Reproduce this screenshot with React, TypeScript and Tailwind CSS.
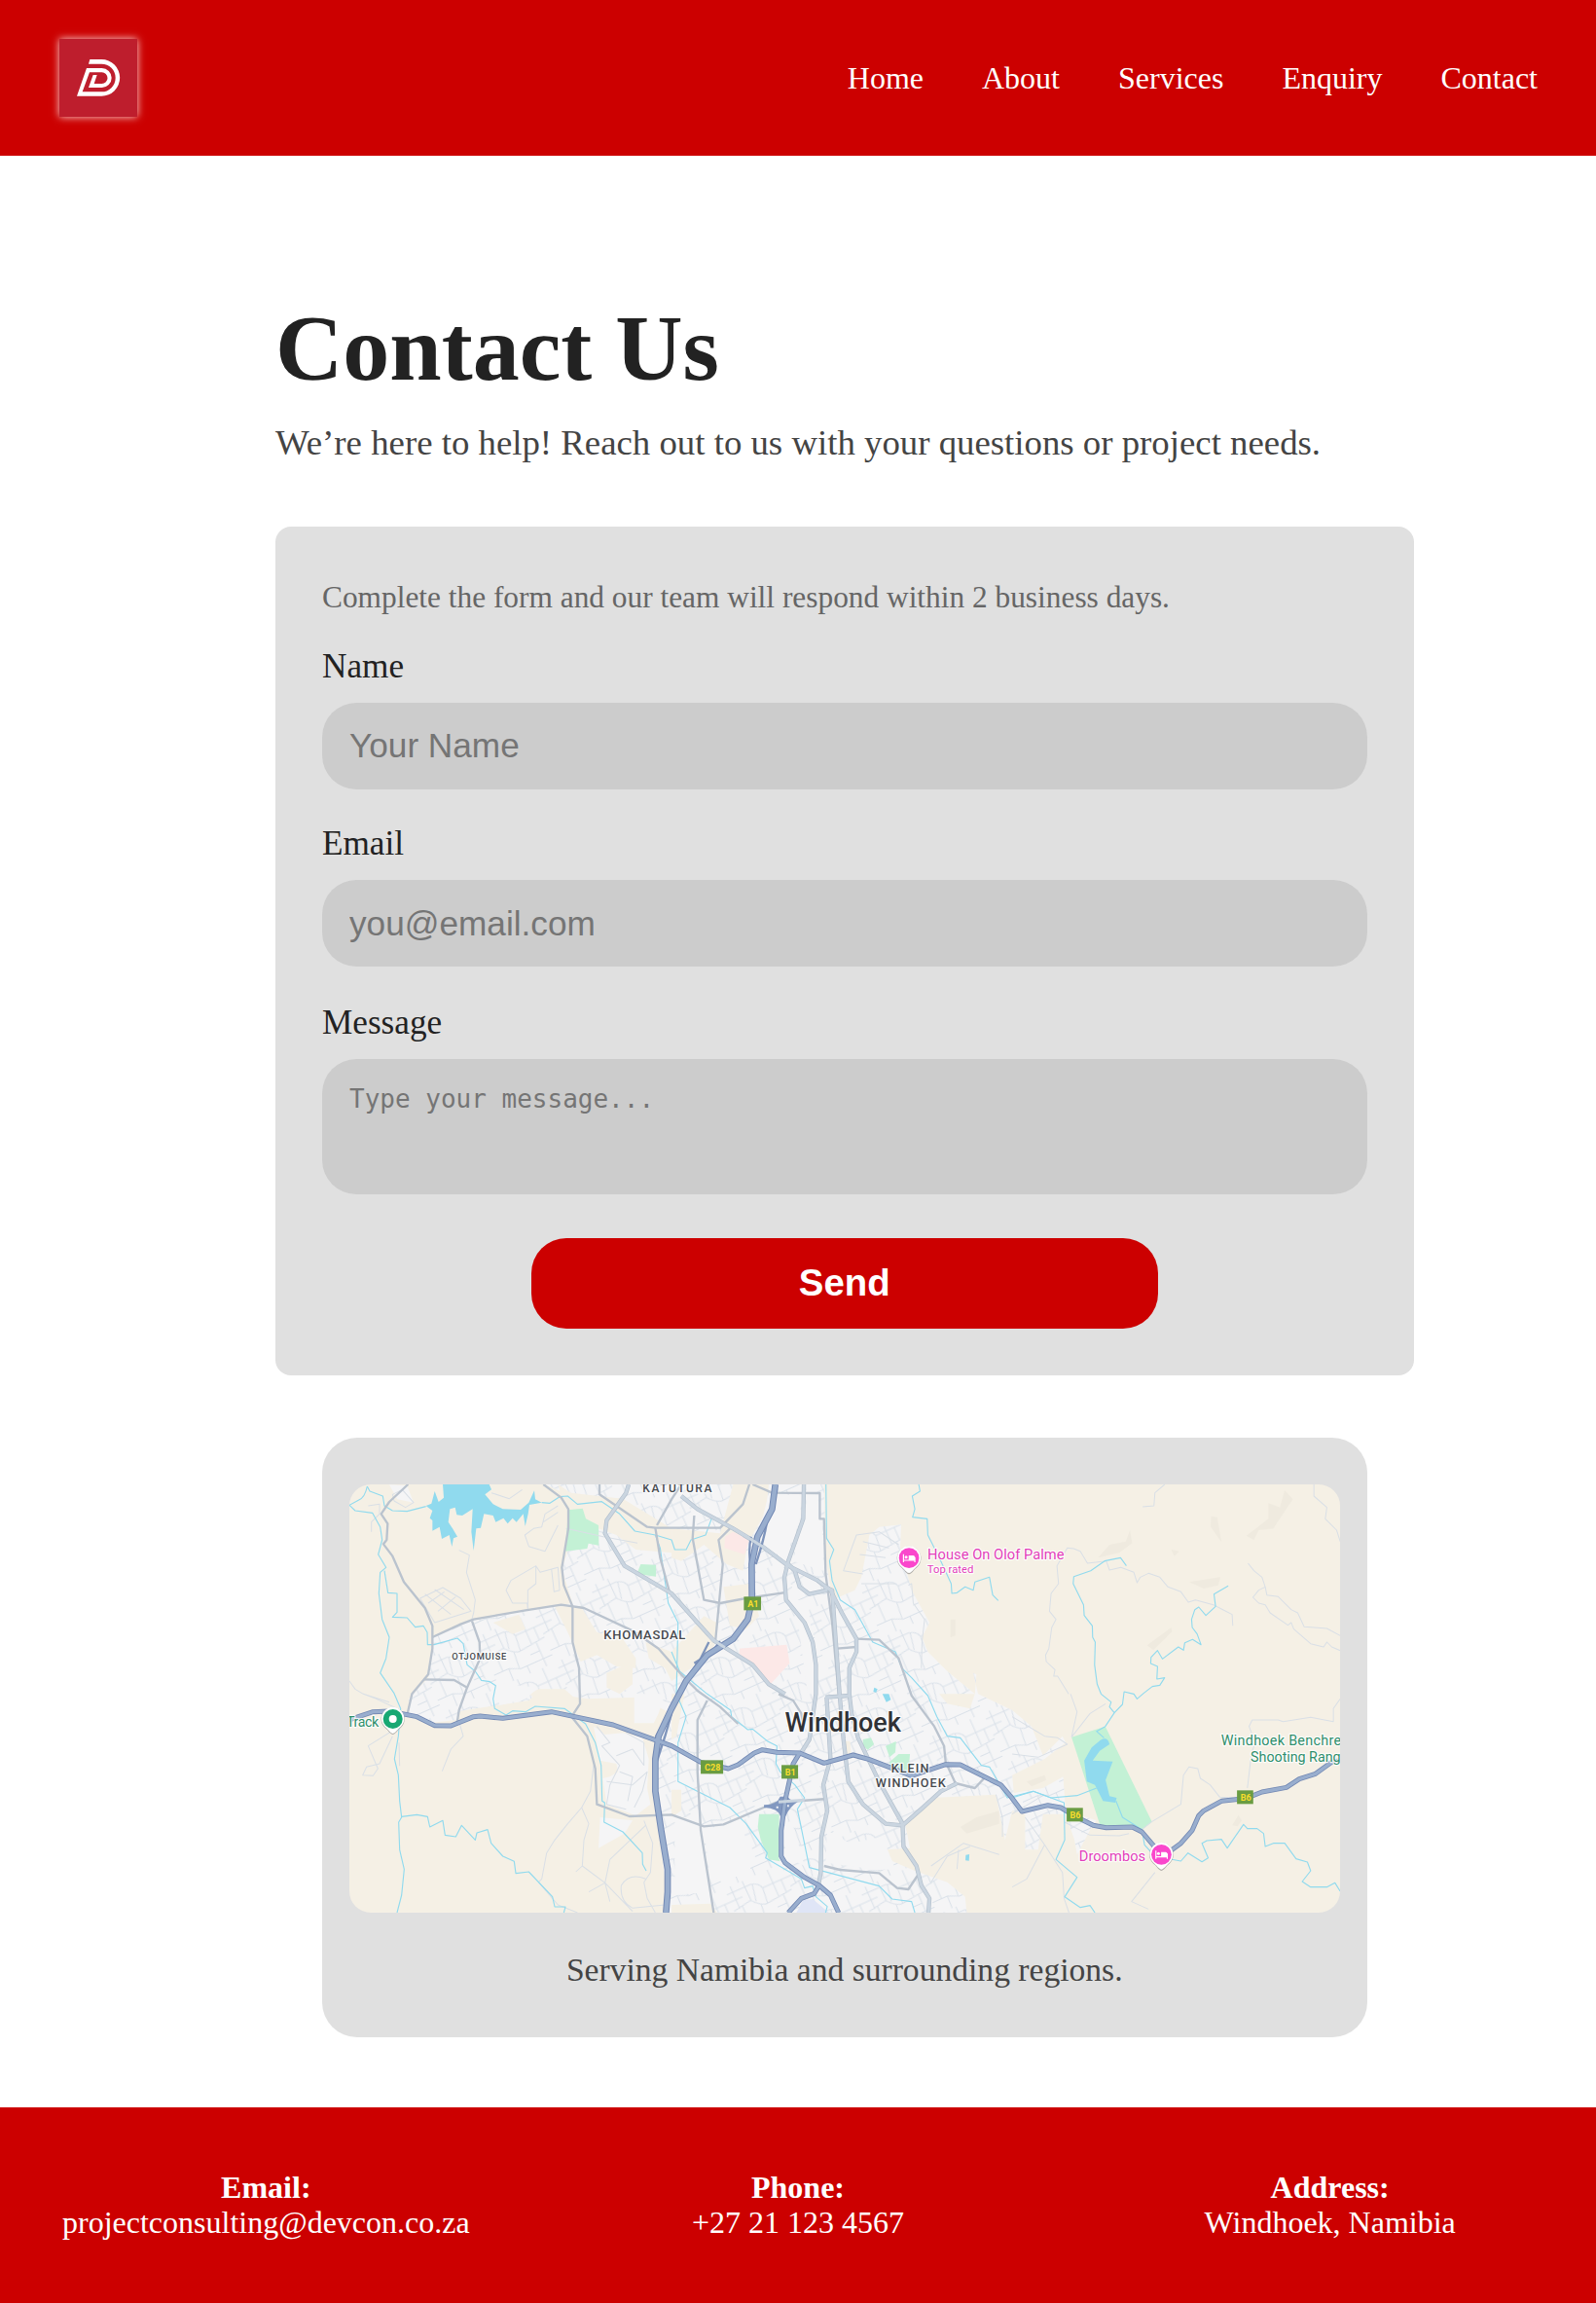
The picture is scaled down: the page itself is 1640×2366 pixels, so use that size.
import React from "react";

const navItems = ["Home", "About", "Services", "Enquiry", "Contact"];

const contacts = [
  { title: "Email:", value: "projectconsulting@devcon.co.za" },
  { title: "Phone:", value: "+27 21 123 4567" },
  { title: "Address:", value: "Windhoek, Namibia" },
];

const urban =
  "M660 74 L740 110 L730 280 L712 335 L745 440 L610 462 L440 490 L315 545 L300 670 L240 735 L240 790 L300 810 L385 800 L400 772 L610 740 L640 712 L790 735 L950 730 L1040 775 L1010 870 L1000 1020 L1040 1394 L1850 1394 L1960 1394 L1955 1345 L1900 1300 L1800 1265 L1730 1235 L1710 1200 L1785 1195 L1770 1120 L1850 1040 L2050 1030 L2078 1170 L2100 1080 L2140 1090 L2140 1200 L2180 1200 L2195 1090 L2265 1090 L2292 1170 L2300 1215 L2345 1130 L2360 1110 L2265 1080 L2257 975 L2195 1010 L2105 1025 L2100 970 L2200 920 L2265 870 L2255 850 L2195 910 L2160 820 L2100 770 L1995 720 L1980 655 L1990 660 L1985 720 L1900 650 L1840 590 L1822 545 L1845 500 L1790 400 L1755 270 L1758 198 L1690 205 L1660 230 L1635 360 L1615 400 L1545 430 L1525 300 L1520 74 Z";

const landPatches = [
  "M700 74 L740 100 L900 118 L1050 210 L1050 285 L940 275 L880 230 L730 175 Z",
  "M1050 210 L1200 225 L1240 74 L1350 74 L1340 160 L1285 255 L1270 340 L1220 320 L1150 260 L1080 310 L1050 300 Z",
  "M500 500 L580 475 L600 520 L560 535 Z",
  "M690 450 L770 450 L820 530 L900 550 L940 610 L940 640 L880 635 L820 600 L770 620 L730 530 Z",
  "M970 560 L1050 590 L1150 480 L1190 500 L1180 590 L1110 640 L1050 680 L1030 640 L980 610 Z",
  "M610 720 L640 705 L720 705 L760 740 L780 800 L700 780 Z",
  "M850 655 L930 620 L930 690 L890 720 L850 700 Z",
  "M1210 390 L1290 380 L1320 480 L1280 520 L1230 510 Z",
  "M1050 720 L1090 720 L1065 850 L1050 860 Z",
  "M1050 1015 L1080 1015 L1080 1080 L1050 1100 Z",
  "M1050 1370 L1170 1366 L1190 1394 L1050 1394 Z",
  "M1875 720 L1985 720 L1970 765 L1900 750 Z",
  "M1580 865 L1600 865 L1605 920 L1585 920 Z",
];

const blankBlocks = [
  "M180 75 L235 78 L255 130 L205 120 Z",
  "M1350 100 L1450 110 L1445 190 L1400 300 L1330 250 L1320 220 Z",
  "M1470 110 L1500 110 L1515 200 L1518 340 L1425 310 Z",
  "M1420 430 L1470 430 L1480 520 L1500 720 L1560 720 L1470 720 L1440 500 Z",
  "M460 680 L640 700 L600 735 L520 755 L505 690 L470 670 Z",
  "M1060 1100 L1130 1100 L1170 1330 L1060 1340 Z",
  "M1150 1140 L1250 1110 L1300 1200 L1290 1280 L1170 1290 Z",
  "M1400 1120 L1420 1110 L1460 1250 L1400 1220 Z",
  "M1530 1140 L1600 1180 L1700 1160 L1740 1260 L1690 1262 L1525 1240 Z",
];

const greens = [
  "M732 153 L776 148 L786 180 L825 200 L826 262 L794 256 L790 272 L722 280 Z",
  "M955 320 L1002 322 L1002 358 L943 350 Z",
  "M1320 1090 L1382 1090 L1380 1225 L1385 1236 L1350 1230 L1325 1170 L1316 1130 Z",
  "M1640 860 L1665 855 L1674 875 L1655 892 L1640 880 Z",
  "M1710 880 L1742 866 L1740 900 L1722 915 Z",
  "M1722 930 L1750 905 L1785 905 L1780 960 L1728 955 Z",
  "M2283 853 L2387 820 L2531 1114 L2500 1138 L2372 1128 Z",
];

const reds = [
  "M1215 235 L1240 220 L1290 245 L1275 290 L1213 270 Z",
  "M1260 580 L1405 568 L1414 625 L1355 690 L1300 635 L1258 595 Z",
];

const shades = [
  "M2365 300 L2400 260 L2450 250 L2463 215 L2470 255 L2430 285 Z",
  "M2822 232 L2890 180 L2890 132 L2925 145 L2940 92 L2965 120 L2905 210 L2860 215 L2845 245 Z",
  "M2713 172 L2732 175 L2745 252 L2712 205 Z",
  "M2646 375 L2742 360 L2735 385 L2690 395 Z",
  "M2516 570 L2590 515 L2593 528 L2535 585 Z",
  "M2590 275 L2615 280 L2600 295 Z",
  "M1910 490 L1925 490 L1925 540 L1910 545 Z",
  "M1940 1130 L1990 1100 L2060 1080 L2060 1120 L1960 1150 Z",
  "M2778 1125 L2797 1093 L2808 1110 L2795 1128 Z",
  "M2145 990 L2200 970 L2205 985 L2160 1005 Z",
];

const waterBodies = [
  "M345 74 L488 74 L495 90 L475 105 L500 135 L530 150 L585 152 L610 130 L627 93 L630 120 L650 130 L612 137 L608 165 L599 203 L593 165 L572 190 L560 178 L545 195 L532 178 L508 190 L500 170 L472 165 L462 208 L448 210 L440 278 L433 220 L437 150 L405 170 L388 168 L383 145 L367 150 L362 190 L375 210 L390 235 L378 240 L373 266 L365 230 L342 242 L335 205 L313 217 L313 185 L305 178 L313 155 L293 140 L310 133 L320 95 L332 128 L348 115 Z",
  "M2372 862 Q2395 850 2400 875 L2370 895 L2348 925 L2410 928 L2388 985 L2400 1035 L2422 1040 L2418 1055 L2380 1050 L2355 1000 L2330 990 L2322 925 L2345 885 Z",
  "M1700 720 L1720 720 L1726 738 L1712 745 Z",
  "M1957 1216 L1968 1214 L1967 1234 L1956 1233 Z",
  "M1675 700 L1685 705 L1680 716 L1672 712 Z",
];

const streams = [
  "M112 80 Q105 115 85 123 L57 138 L75 155 L128 162 L152 205 L158 245 L146 290 L170 330 L152 345 L148 410 L158 490 L180 545 L170 610 L152 655 L195 718 L215 765 L208 850 L196 920 L208 970 L212 1050 L218 1100 L209 1115 L212 1200 L226 1260 L218 1340 L204 1394",
  "M112 80 L120 95 L160 110 L165 140 L190 155 L235 157 L293 142",
  "M165 340 L176 408 L204 410 L204 468 L190 483 L235 485 L260 514 L285 510 L297 530 L298 568 L318 568 L390 548 L408 565 L420 630 L445 650 L464 678 L490 682 L508 694 L500 735 L505 765 L540 785 L560 772 L600 775 L630 758 L720 765 L785 812 L815 870 L833 940 L836 1050 L844 1055 L842 1115 L900 1145 L960 1210 L961 1245 L972 1265",
  "M218 1098 L265 1092 L298 1098 L305 1130 L345 1110 L352 1155 L385 1160 L403 1125 L445 1170 L450 1148 L483 1138 L494 1180 L530 1220 L565 1236 L570 1273 L610 1268 L683 1345 L690 1376 L723 1376 L718 1394",
  "M650 130 L675 132 L705 112 L730 110 L760 135 L835 127 L890 165 L937 218 L1000 230 L1050 245 L1060 275 L1095 275 L1110 245 L1155 230 L1175 175",
  "M1000 230 L1015 270 L1040 440 L1070 500 L1065 720 L1095 790 L1070 870 L1070 990 L1140 1025 L1230 1070 L1280 1120 L1345 1210 L1340 1225 L1450 1290 L1460 1318 L1485 1312 L1495 1345 L1530 1375 L1525 1394",
  "M1050 590 L1075 650 L1160 720 L1232 770 L1235 790 L1285 830 L1300 828 L1345 865 L1375 880 L1372 935 L1385 960 L1430 1000 L1460 1040 L1438 1075 L1475 1255 L1690 1312 L1730 1352 L1790 1360 L1800 1394",
  "M1526 74 L1528 240 L1550 275 L1537 310 L1545 370 L1570 430 L1615 460 L1670 560 L1740 590 L1760 640 L1790 670 L1840 725 L1868 790 L1900 850 L1940 855 L2005 940 L2030 945 L2085 1040 L2165 1020 L2260 1055 L2262 1170 L2235 1230 L2300 1285 L2262 1345 L2310 1378 L2340 1372 L2355 1394",
  "M1812 74 L1816 95 L1792 110 L1800 150 L1793 175 L1838 180 L1840 230 L1860 270 L1880 310 L1912 380 L1914 410 L1930 408 L1955 390 L1980 400 L1985 375 L2030 360 L2040 415 L2057 432",
  "M2452 325 L2434 300 L2385 310 L2342 340 L2290 358 L2288 380 L2320 445 L2322 478 L2347 510 L2348 545 L2356 560 L2354 630 L2362 690 L2374 720 L2405 745 L2400 760 L2415 778 L2387 820 L2360 835 L2383 855",
  "M2415 778 L2440 752 L2445 713 L2475 720 L2485 735 L2505 718 L2532 697 L2555 693 L2570 670 L2546 674 L2548 635 L2527 626 L2528 607 L2548 586 L2563 612 L2612 575 L2628 585 L2632 562 L2656 552 L2682 568 L2670 535 L2655 515 L2653 490 L2663 460 L2675 452 L2697 478 L2727 450 L2722 412 L2766 387",
  "M2100 1040 L2165 1020 L2220 1040 L2300 1033 L2360 1010",
  "M2420 1050 L2440 1100 L2500 1138 L2508 1185 L2540 1220 L2620 1235 L2642 1210 L2685 1237 L2704 1225 L2685 1180 L2700 1172 L2745 1168 L2763 1195 L2813 1122 L2825 1135 L2855 1135 L2875 1150 L2880 1190 L2905 1180 L2940 1180 L2975 1228 L3010 1238 L3020 1265 L2994 1298 L3020 1315 L3070 1315 L3095 1302 L3111 1328",
];

const minorRoads = [
  "M395 277 L427 292 L418 345 L445 430 L440 470 L433 495",
  "M275 425 L345 392 L400 425 L432 465 L320 500 Z M290 412 L370 475 M320 398 L410 460 M300 440 L350 405 M330 465 L385 420",
  "M607 460 L605 440 L560 440 L540 400 L555 370 L632 325 L632 380 L607 400 Z M632 325 L645 345 L700 330 M680 335 L700 330 L705 400 L688 405 Z",
  "M660 280 L610 265 L598 230 L625 210 L650 205 L660 165 L700 140 M660 280 L700 200 M655 190 L700 160",
  "M190 105 L220 90 L255 130 L230 145 L195 125 Z M115 140 L150 135 L150 165 L125 190 L125 220",
  "M495 100 L550 118 L590 90 M725 210 L840 235 L945 255",
  "M57 680 L75 705 L100 720 L180 745 M100 720 L140 735 L215 770",
  "M195 830 L115 880 L145 950 L130 972 L98 970 L110 945 L150 935 L190 850 M210 870 L212 942",
  "M395 805 L408 850 L370 890 L343 958",
  "M810 940 L800 1020 L773 1070 L730 1120 L690 1170 L665 1210 L650 1290 L640 1300 L700 1370 L760 1394 M773 1070 L795 1120 L780 1170 L775 1250 L845 1302 L860 1360 M755 1268 L775 1250 M970 1125 L860 1230 L845 1302 L795 1330 M845 1302 L930 1390 M970 1290 Q920 1270 895 1310 Q890 1360 930 1380 L1030 1370 M965 1110 L992 1180 L985 1270 L965 1300 L975 1350 L1000 1394",
  "M820 820 L860 870 L835 880 L890 940 L860 1000 L850 1060 L910 1075 M880 910 L930 890 L965 940 M910 840 L965 870 L965 940 M890 960 L930 975 L915 1050 M850 990 L930 1000 L975 960 L960 1020 L935 1070",
  "M1635 380 L1740 380 M1640 350 L1580 340 L1620 230 L1690 220 L1750 260 M1630 290 L1710 300 M1640 250 L1720 270 M1780 385 L1790 380 L1795 440 L1830 490 L1822 560 L1820 640",
  "M2274 720 L2240 665 L2228 665 L2232 645 L2205 620 L2203 600 L2213 580 L2222 515 L2235 490 L2215 465 L2220 410 L2243 380 L2238 325 L2270 270 L2290 272 L2310 280 L2332 317 L2390 310 L2400 338 L2435 330 L2475 345 L2485 377 L2495 360 L2520 348 L2555 360 L2580 390 L2620 405 L2643 437 L2665 430 L2720 445 L2745 458 L2778 475 L2780 510",
  "M2570 74 L2540 100 L2537 140 L2502 143 M3030 74 L3030 110 L3070 145 L3065 180 L3100 215 L3111 250",
  "M2827 317 L2845 340 L2870 360 L2880 390 L2860 400 L2842 422 L2860 440 L2880 445 L2895 470 L2950 508 L2960 500 L2968 520 L3020 565 L3060 575 L3070 560 L3085 575 L3111 586 M2880 390 L2885 415 L2920 420 L2960 460 L2980 470 L3000 513 L3070 518 L3111 540",
  "M2280 720 L2300 775 L2283 853 M2388 750 L2340 780 L2283 853 M2275 1394 L2260 1350 L2255 1270 L2200 1185 L2140 1100 M2200 1185 L2145 1290 L2100 1315",
  "M2500 1138 L2530 1114 L2620 1060 L2628 970 L2645 945 L2672 950 L2680 980 L2710 1000 L2740 1038 L2780 1040 M2825 1010 L2838 900 L2850 870 L2830 820 L2840 800 L2920 800 L2935 805 L3020 792 L3090 805 L3090 765 L3111 735",
  "M2540 1270 L2468 1360 L2520 1383 M2262 1115 L2310 1140 L2340 1155 L2430 1157 L2460 1150",
  "M2100 790 L2200 850 L2240 855 L2270 875 L2180 915 L2100 905 M2100 1090 L2150 1060 L2200 1030 M2050 1030 L2070 1100 L2070 1160",
  "M1850 1300 L1900 1220 L1970 1190 M1850 1250 L1950 1180 L2060 1215 M1935 1200 L1930 1260",
];

const secondary = [
  "M238 74 L180 128 L155 165 L175 195 L172 245 L162 258 L190 295 L225 375 L290 455 L313 510 L313 580 L300 660 L250 720 L235 785",
  "M313 545 L400 505 L440 490 L600 462 L710 445 L780 455 L930 525 L1010 580 L1080 660 L1130 710 L1200 760 L1255 812",
  "M435 495 L458 560 L460 610 L420 700 L395 770 L388 815",
  "M285 675 L380 677 L420 700",
  "M655 74 L710 115 L732 150 L732 210 L712 330 L718 385 L745 450 L745 560 L765 640 L768 750 L742 790 L790 850 L815 950 L820 1060 L920 1097 L1050 1092 L1150 1128 L1210 1122 L1370 1055 L1530 1043",
  "M828 74 L828 105 L975 205 L1000 208 L1200 208 L1270 135 L1290 74",
  "M1000 208 L1015 300 L1045 410 M1005 200 L1050 120 L1080 74",
  "M1300 74 L1360 100 L1507 101 L1507 180 L1520 180 L1525 350 L1545 500 L1565 720",
  "M1120 170 L1115 240 L1150 430 L1200 440 L1280 425 L1395 408",
  "M1230 210 L1195 245 L1208 320 L1185 560",
  "M1160 740 L1130 800 L1130 960 L1140 1140 L1180 1394",
  "M1380 720 L1425 740 L1450 780 L1455 830",
  "M1520 1250 L1570 1262 L1690 1272 L1745 1318 L1780 1322 L1808 1280",
  "M1560 580 L1620 575 M1620 550 L1690 553 L1750 610 L1790 725 L1860 820 L1890 880 L1895 930 L1925 995 L1985 1010 L2018 975",
];

const primary = [
  "M918 74 L910 100 L850 185 L845 225 L905 325 L1050 410 L1130 500 L1180 555 L1300 630 L1350 690 L1400 720",
  "M1080 110 L1130 150 L1240 210 L1330 265 L1410 325 L1500 370 L1540 400 L1575 470 L1620 550 L1620 590 L1598 640 L1598 720 L1605 780 L1625 855 L1690 990 L1762 1120",
  "M1458 74 L1456 180 L1410 310 L1398 360 L1403 430 L1460 500 L1485 560 L1495 630 L1495 720 L1475 860 L1450 900 M1410 320 L1430 340 L1445 390 L1475 412 L1530 400",
  "M1520 390 L1545 400 L1555 540 L1568 720 L1580 860 L1595 990 L1640 1060 L1710 1120 L1762 1125 L1825 1070 L1880 1020 L1930 995",
  "M1528 730 L1540 920 L1518 1000 L1530 1080 L1512 1160 L1510 1270 L1503 1310 M1525 730 L1600 725",
  "M1762 1120 L1765 1190 L1805 1250 L1820 1310 L1845 1350 L1842 1394",
];

const westernBypass = [
  "M1370 74 L1360 150 L1315 235 L1297 320 L1298 430 L1285 490 L1240 550 L1160 600 L1095 680 L1050 765 L1010 850 L1000 920 L1000 1020 L1018 1140 L1038 1260 L1038 1330 L1033 1394",
];

const highways = [
  "M57 800 L85 790 L130 775 L180 773 L265 790 L320 817 L370 818 L440 790 L460 788 L530 795 L680 775 L870 815 L1050 880 L1140 930 L1225 950 L1255 938 L1305 902 L1330 892 L1375 900 L1445 902 L1520 933 L1610 908 L1660 922 L1790 972 L1895 937 L1940 938 L2020 978 L2065 1000 L2095 1035 L2130 1082 L2210 1063 L2250 1070 L2300 1100 L2350 1125 L2390 1132 L2470 1130 L2500 1145 L2555 1210 L2590 1202 L2620 1180 L2655 1140 L2675 1095 L2690 1080 L2745 1050 L2820 1042 L2870 1022 L2945 1008 L2985 982 L3035 966 L3085 930 L3111 925",
  "M1445 902 L1425 935 L1400 1050 L1388 1140 L1388 1220 L1400 1240 L1460 1285 L1505 1310 L1540 1340 L1565 1394 M1505 1310 L1490 1335 L1450 1350 L1410 1394",
];

const ramps = [
  "M1345 185 Q1335 245 1310 320 M1295 235 Q1285 280 1296 340",
  "M1200 558 L1175 590 L1120 625 M1165 560 L1140 610 L1105 660",
  "M1050 780 L1030 850 L1004 930 M1030 800 L1003 850 L1000 920",
];

function Strokes({ paths, color, width }: { paths: string[]; color: string; width: number }) {
  return (
    <g fill="none" stroke={color} strokeWidth={width} strokeLinejoin="round">
      {paths.map((d) => (
        <path key={d} d={d} />
      ))}
    </g>
  );
}

function Shapes({ paths, color }: { paths: string[]; color: string }) {
  return (
    <g fill={color}>
      {paths.map((d) => (
        <path key={d} d={d} />
      ))}
    </g>
  );
}

function Shield({ x, y, w, label }: { x: number; y: number; w: number; label: string }) {
  return (
    <g>
      <rect x={x} y={y} width={w} height={42} fill="#6a9c42" />
      <text x={x + w / 2 + 2} y={y + 31} fontSize={27} fontWeight={700} fill="#f8dc2c" textAnchor="middle">
        {label}
      </text>
    </g>
  );
}

function HotelPin({ x, y }: { x: number; y: number }) {
  return (
    <g transform={`translate(${x} ${y})`}>
      <path d="M0 50 C-10 48 -14 36 -26 27 A37 37 0 1 1 26 27 C14 36 10 48 0 50 Z" fill="#777" opacity={0.55} />
      <path d="M0 46 C-9 44 -14 34 -26 24 A36 36 0 1 1 26 24 C14 34 9 44 0 46 Z" fill="#fff" />
      <circle r={31} fill="#fa47cc" />
      <path d="M-17 -12 V13 M-17 7 H18 M18 13 V-3" fill="none" stroke="#fff" strokeWidth={3.5} />
      <path d="M-1 -8 H13 Q18 -8 18 -3 V7 H-1 Z" fill="#fff" />
      <circle cx={-9} cy={-3} r={4.5} fill="#fff" />
    </g>
  );
}

function WindhoekMap() {
  return (
    <svg viewBox="57 74 3054 1320" className="block h-[440px] w-full rounded-[22px]" fontFamily="Roboto, sans-serif" preserveAspectRatio="none">
      <defs>
        <pattern id="streets" width="190" height="170" patternUnits="userSpaceOnUse" patternTransform="rotate(-24)">
          <path
            d="M0 20 H80 Q105 25 110 45 H190 M0 75 L60 65 Q80 90 100 95 L190 85 M0 130 H50 L85 145 H190 M20 0 V75 M60 0 L62 66 M85 22 L75 75 M110 45 L105 93 M145 0 V88 M172 45 V85 M30 70 V130 M50 130 L48 170 M85 90 L80 145 M160 87 V170 M105 145 V170 M0 45 H42 M128 118 H160"
            fill="none"
            stroke="#dae1e9"
            strokeWidth="3"
          />
        </pattern>
        <clipPath id="urbanClip">
          <path d={urban} />
        </clipPath>
      </defs>
      <rect x="57" y="74" width="3054" height="1320" fill="#f5f0e5" />
      <Shapes color="#efeadf" paths={shades} />
      <path d={urban} fill="#f5f5f6" />
      <g clipPath="url(#urbanClip)">
        <rect x="57" y="74" width="3054" height="1320" fill="url(#streets)" />
      </g>
      <path d="M810 820 L845 845 L900 840 L960 855 L980 920 L975 1010 L985 1060 L940 1095 L850 1060 L838 980 L860 975 L885 960 L880 935 L830 925 Z M830 1100 L930 1110 L905 1150 L825 1195 Z M935 720 L1030 720 L1010 780 L995 810 L935 810 Z" fill="#f5f5f6" />
      <Shapes color="#f5f0e5" paths={landPatches} />
      <Shapes color="#f5f5f6" paths={blankBlocks} />
      <path d="M1435 1394 L1455 1355 L1485 1352 L1535 1394 Z" fill="#dfe5f6" />
      <Shapes color="#fce8e7" paths={reds} />
      <Shapes color="#c3f1d5" paths={greens} />
      <Strokes paths={minorRoads} color="#d9dfe6" width={3} />
      <Shapes color="#90daee" paths={waterBodies} />
      <Strokes paths={streams} color="#90daee" width={3.4} />
      <Strokes paths={secondary} color="#bac3ce" width={7} />
      <Strokes paths={primary} color="#b4c0cd" width={13} />
      <Strokes paths={primary} color="#cad5e0" width={9} />
      <Strokes paths={ramps} color="#7e94bb" width={7} />
      <path d="M1335 1062 Q1375 1062 1385 1036 H1408 Q1415 1050 1442 1050 Q1412 1070 1402 1096 H1386 Q1378 1072 1335 1070 Z" fill="#8298c0" />
      <path d="M1373 1066 h6 v6 h-6 Z M1406 1062 h6 v6 h-6 Z" fill="#f5f5f6" />
      <Strokes paths={highways} color="#7288b3" width={15} />
      <Strokes paths={westernBypass} color="#7288b3" width={20} />
      <Strokes paths={highways} color="#99aece" width={10} />
      <Strokes paths={westernBypass} color="#99aece" width={14} />
      <Strokes paths={["M1240 210 L1330 265 L1410 325 M1165 540 L1180 555 L1215 577 M1380 1053 L1460 1047"]} color="#cad5e0" width={9} />

      <Shield x={1273} y={420} w={53} label="A1" />
      <Shield x={1140} y={924} w={69} label="C28" />
      <Shield x={1389} y={939} w={51} label="B1" />
      <Shield x={2268} y={1071} w={50} label="B6" />
      <Shield x={2793} y={1017} w={50} label="B6" />

      <HotelPin x={1782} y={301} />
      <HotelPin x={2560} y={1215} />
      <g transform="translate(191 797)">
        <path d="M0 48 C-9 46 -13 36 -25 26 A36 36 0 1 1 25 26 C13 36 9 46 0 48 Z" fill="#777" opacity={0.55} />
        <path d="M0 45 C-9 43 -13 33 -25 23 A35 35 0 1 1 25 23 C13 33 9 43 0 45 Z" fill="#fff" />
        <circle r={30} fill="#18a873" />
        <circle r={12} fill="#fff" />
      </g>

      <g stroke="#fff" strokeOpacity={0.85} strokeLinejoin="round" strokeWidth={7} className="[paint-order:stroke]">
        <g fill="#46494e" fontWeight={500}>
          <text x={961} y={99} fontSize={36} textLength={213}>KATUTURA</text>
          <text x={841} y={552} fontSize={39} textLength={252}>KHOMASDAL</text>
          <text x={373} y={613} fontSize={28} textLength={168}>OTJOMUISE</text>
          <text x={1727} y={963} fontSize={38} textLength={116}>KLEIN</text>
          <text x={1679} y={1008} fontSize={38} textLength={216}>WINDHOEK</text>
        </g>
        <text x={1399} y={835} fontSize={81} fontWeight={500} fill="#303236" textLength={358}>Windhoek</text>
        <g fill="#e33fba">
          <text x={1839} y={306} fontSize={44} textLength={421}>House On Olof Palme</text>
          <text x={1838} y={348} fontSize={34} textLength={143}>Top rated</text>
          <text x={2306} y={1236} fontSize={44} textLength={205}>Droombos</text>
        </g>
        <g fill="#2f8f6c">
          <text x={48} y={821} fontSize={43} textLength={100}>Track</text>
          <text x={2744} y={877} fontSize={43} textLength={408}>Windhoek Benchrest</text>
          <text x={2835} y={929} fontSize={43} textLength={300}>Shooting Range</text>
        </g>
      </g>
    </svg>
  );
}

function Logo() {
  return (
    <div className="h-20 w-20 bg-[#be1e2d] shadow-[0_0_8px_rgba(255,255,255,0.85)]">
      <svg viewBox="0 0 240 240" className="h-20 w-20" fill="#fff">
        <path d="M94 63 H130 A56.500 56.500 0 0 1 130 176 H54 L84 90 H131 A30 30 0 0 1 131 150 H90 L104 111 H116 L107 138 H131 A17.500 17.500 0 0 0 131 103 H93 L71 163 H130 A43 43 0 0 0 130 77 H90 Z" />
      </svg>
    </div>
  );
}

const labelClass = "block h-10 text-[35.2px] leading-10 text-[#222]";
const inputClass =
  "block h-[89.4px] w-full rounded-[35.2px] bg-[#ccc] px-7 font-['Liberation_Sans',Arial,sans-serif] text-[35.2px] outline-none placeholder:text-[#757575]";

export default function App() {
  return (
    <div className="flex h-[2366px] w-[1640px] flex-col bg-white font-['Liberation_Serif','Times_New_Roman',serif]">
      <header className="flex h-40 shrink-0 items-center justify-between bg-[#cc0000] pr-[60px] pl-[61px]">
        <Logo />
        <nav className="flex gap-[60px] text-[32px] leading-9 text-white">
          {navItems.map((item) => (
            <a key={item} href="#">{item}</a>
          ))}
        </nav>
      </header>

      <main className="ml-[283px] w-[1169.5px] pt-[143px]">
        <h1 className="text-[96px] leading-[110px] font-bold text-[#222]">Contact Us</h1>
        <p className="mt-[21px] text-[36.8px] leading-[42px] text-[#444]">
          We’re here to help! Reach out to us with your questions or project needs.
        </p>

        <form className="mt-[64.700px] rounded-2xl bg-[#e0e0e0] px-12 pt-[55.3px] pb-12">
          <p className="text-[31.36px] leading-9 text-[#666]">
            Complete the form and our team will respond within 2 business days.
          </p>
          <label className={`${labelClass} mt-[33px]`} htmlFor="name">Name</label>
          <input id="name" className={`${inputClass} mt-[16.6px]`} placeholder="Your Name" />
          <label className={`${labelClass} mt-[36px]`} htmlFor="email">Email</label>
          <input id="email" className={`${inputClass} mt-[17px]`} placeholder="you@email.com" />
          <label className={`${labelClass} mt-[37.6px]`} htmlFor="message">Message</label>
          <textarea
            id="message"
            className="mt-[17px] block h-[139px] w-full resize-none rounded-[35.2px] bg-[#ccc] px-7 pt-[25px] font-['DejaVu_Sans_Mono',monospace] text-[26px] leading-[32px] outline-none placeholder:text-[#757575]"
            placeholder="Type your message..."
          />
          <button
            type="button"
            className="mx-auto mt-[45px] block h-[92.6px] w-[60%] rounded-[36px] bg-[#cc0000] font-['Liberation_Sans',Arial,sans-serif] text-[38.4px] font-bold text-white"
          >
            Send
          </button>
        </form>

        <section className="mx-12 mt-16 rounded-[36px] bg-[#e0e0e0] px-[27.7px] pt-[48px] pb-[50px]">
          <WindhoekMap />
          <p className="mt-10 text-center text-[33.6px] leading-[38px] text-[#444]">
            Serving Namibia and surrounding regions.
          </p>
        </section>
      </main>

      <footer className="mt-auto grid h-[201.500px] shrink-0 grid-cols-3 bg-[#cc0000] pt-[64.500px] text-center text-[32px] leading-[36px] text-white">
        {contacts.map((c) => (
          <div key={c.title}>
            <strong className="block">{c.title}</strong>
            {c.value}
          </div>
        ))}
      </footer>
    </div>
  );
}
